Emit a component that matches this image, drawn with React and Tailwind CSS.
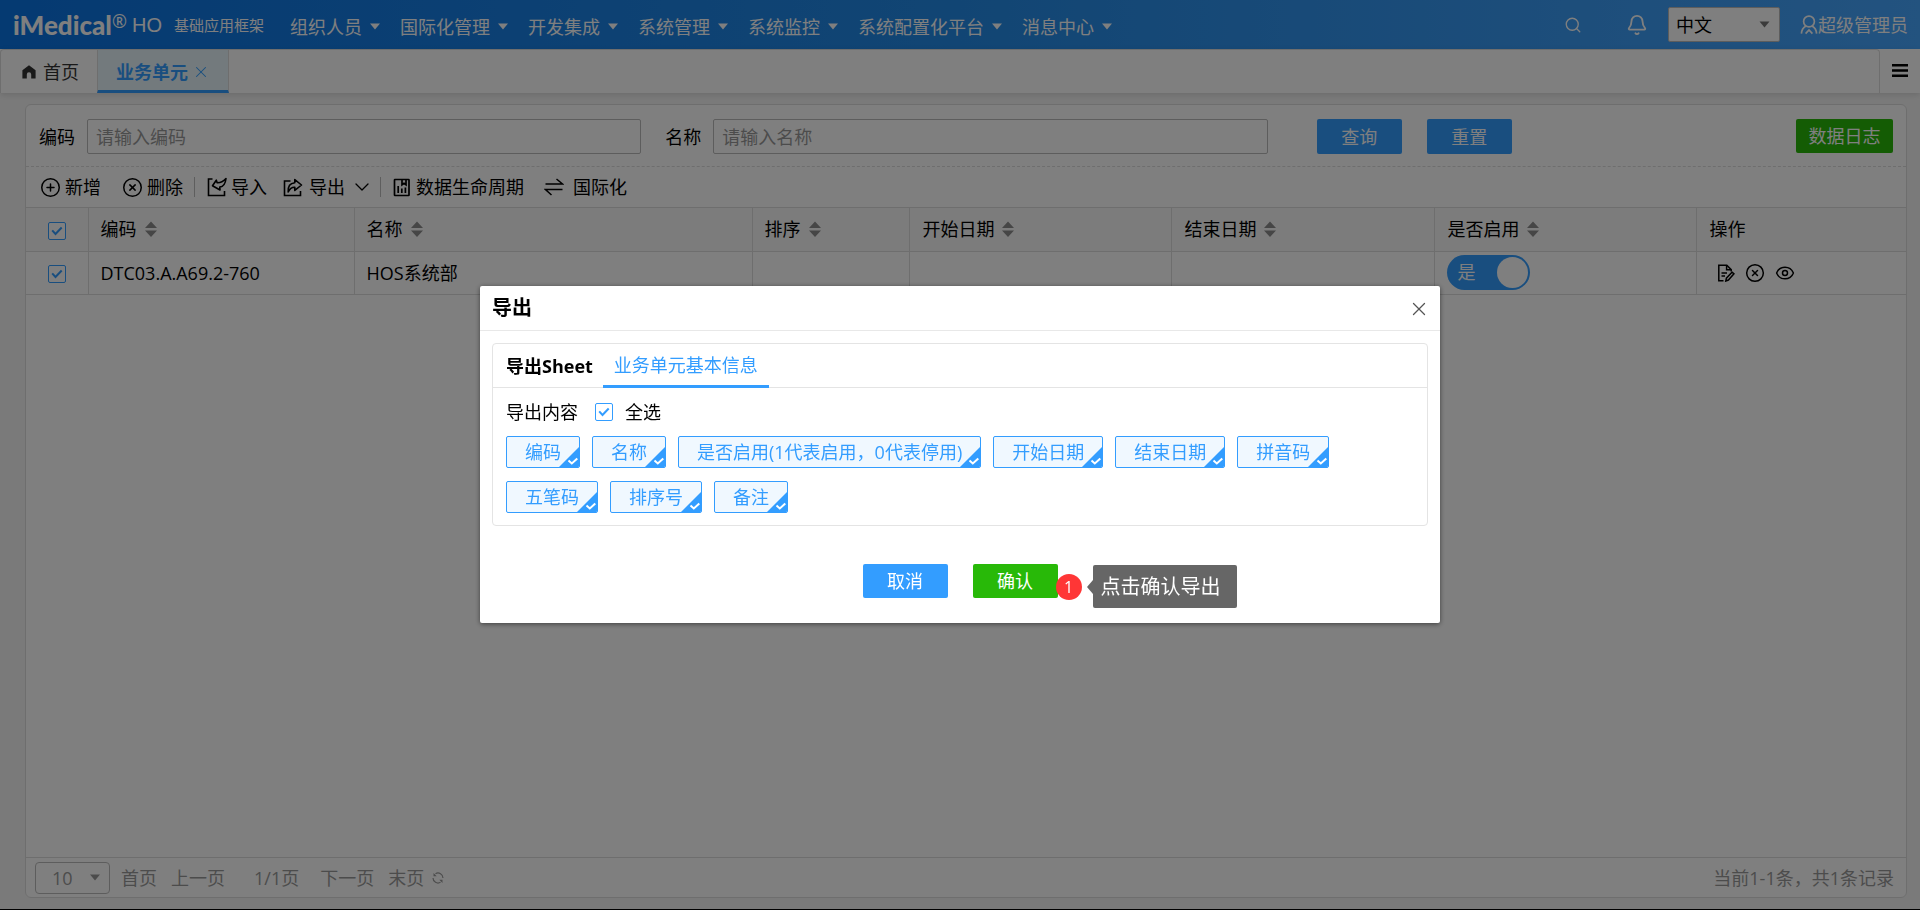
import React from "react";
import { Bell, ChevronDown, CirclePlus, CircleX, Eye, Search, X } from "lucide-react";

const NAV = ["组织人员", "国际化管理", "开发集成", "系统管理", "系统监控", "系统配置化平台", "消息中心"];
const FIELDS = ["编码", "名称", "是否启用(1代表启用，0代表停用)", "开始日期", "结束日期", "拼音码", "五笔码", "排序号", "备注"];
const COLUMNS = [
  { title: "编码", width: 266 },
  { title: "名称", width: 398 },
  { title: "排序", width: 158 },
  { title: "开始日期", width: 262 },
  { title: "结束日期", width: 263 },
  { title: "是否启用", width: 262 },
];

function Caret({ className }) {
  return (
    <svg viewBox="0 0 10 7" className={className} fill="currentColor" aria-hidden="true">
      <path d="M0 0.5h10L5 6.5z" />
    </svg>
  );
}

function SortIcon() {
  return (
    <svg viewBox="0 0 12 16" className="h-4 w-3 text-[#8c8c8c]" fill="currentColor" aria-hidden="true">
      <path d="M6 0.5 12 7H0zM0 9.5h12L6 16z" />
    </svg>
  );
}

function HomeIcon() {
  return (
    <svg viewBox="0 0 14 14" className="size-[14px]" fill="currentColor" aria-hidden="true">
      <path d="M7 0.2 13.6 5.2V13.6H9.2V9.4a2.2 2.2 0 0 0-4.4 0V13.6H0.4V5.2z" />
    </svg>
  );
}

function MenuIcon() {
  return (
    <svg viewBox="0 0 16 13" className="h-[13px] w-4" fill="currentColor" aria-hidden="true">
      <path d="M0 0h16v2.6H0zM0 5.2h16v2.6H0zM0 10.4h16V13H0z" />
    </svg>
  );
}

function UserIcon() {
  return (
    <svg viewBox="0 0 18 20" className="h-5 w-[18px]" fill="none" stroke="currentColor" strokeWidth="1.7" aria-hidden="true">
      <circle cx="9" cy="6.5" r="5.4" />
      <path d="M6 11C3.4 12.4 1.6 15 1.4 18.6M12 11c2.6 1.4 4.4 4 4.6 7.6M5.6 18.6 9 15l3.4 3.6" />
    </svg>
  );
}

function ImportIcon() {
  return (
    <svg viewBox="0 0 20 20" className="size-5" fill="none" stroke="currentColor" strokeWidth="1.6" aria-hidden="true">
      <path d="M5.5 2H1.5v16.5h16V14" />
      <path d="M19 1.5c-.6 5.200-2.700 8.200-6.200 8.600l.2 2.900L5.500 8.800 9.300 3.200l.9 2.600c3 .2 6-1.300 8.800-4.300z" strokeLinejoin="round" />
    </svg>
  );
}

function ExportIcon() {
  return (
    <svg viewBox="0 0 20 20" className="size-5" fill="none" stroke="currentColor" strokeWidth="1.6" aria-hidden="true">
      <path d="M7.5 4H1.5v14.5h16V14" />
      <path d="M5.2 15c-.4-5.500 1.800-8.800 6.600-9.200V2.600L18.500 8l-6.700 5.400v-3.200c-3.300-.2-4.900 1.200-6.600 4.800z" strokeLinejoin="round" />
    </svg>
  );
}

function LifecycleIcon() {
  return (
    <svg viewBox="0 0 18 19" className="h-[19px] w-[18px]" fill="none" stroke="currentColor" strokeWidth="1.7" aria-hidden="true">
      <rect x="1.5" y="1.5" width="14.5" height="16" rx="0.5" />
      <path d="M9 1.5v5.2l2-1.5 2 1.5V1.5M5.2 8v7M8.8 10.5V15M12.4 9.5V15" />
    </svg>
  );
}

function SwapIcon() {
  return (
    <svg viewBox="0 0 20 18" className="h-[18px] w-5" fill="none" stroke="currentColor" strokeWidth="1.5" aria-hidden="true">
      <path d="M1.5 6h17L12.5 1M18.5 11.5h-17l6 5.5" />
    </svg>
  );
}

function EditDocIcon() {
  return (
    <svg viewBox="0 0 18 18" className="size-[18px]" fill="none" stroke="currentColor" strokeWidth="1.5" aria-hidden="true">
      <path d="M6.5 16.8H1.8V1.2h8l4.4 4.4v2" />
      <path d="M9.6 1.2v4.6h4.6M4.5 9H10M4.500 12H8" />
      <path d="m15 8.2 2 1.6-5.6 6.2-2.6 1 .6-2.8z" />
    </svg>
  );
}

function RefreshIcon() {
  return (
    <svg viewBox="0 0 12 12" className="size-3" fill="none" stroke="currentColor" strokeWidth="1.2" aria-hidden="true">
      <path d="M3.5 1.7A5 5 0 0 1 11 6M8.5 10.3A5 5 0 0 1 1 6" />
      <path d="M1.5 1v3.2h3.2zM10.5 11V7.8H7.3z" fill="currentColor" stroke="none" />
    </svg>
  );
}

function Checkbox({ id, label }) {
  return (
    <span className="inline-grid size-[18px] place-items-center align-middle text-[#339dff]">
      <input
        id={id}
        type="checkbox"
        defaultChecked
        aria-label={label}
        className="col-start-1 row-start-1 size-[18px] appearance-none rounded-xs border border-[#339dff] bg-white"
      />
      <svg viewBox="0 0 12 10" className="pointer-events-none col-start-1 row-start-1 h-[10px] w-3" fill="none" stroke="currentColor" strokeWidth="2" aria-hidden="true">
        <path d="m1.2 4.4 3.3 3.6 6.2-6.5" />
      </svg>
    </span>
  );
}

function Divider() {
  return <span className="h-5 w-px bg-[#bdbdbd]" />;
}

function Header() {
  return (
    <header className="flex h-[49px] items-center bg-linear-to-r from-[#0a74e4] via-[#238be8] to-[#46a6ff] pr-3 pl-[13px] text-white">
      <div className="flex items-center whitespace-nowrap">
        <span className="font-['Lato'] text-[26px] leading-6 font-black">iMedical</span>
        <span className="self-start text-[18px] leading-4">®</span>
        <span className="ml-[5px] font-['Liberation_Sans'] text-[20px] leading-6">HO</span>
        <span className="ml-3 text-[15px] leading-6">基础应用框架</span>
      </div>
      <nav className="ml-[26px] flex flex-1 gap-5 pt-1">
        {NAV.map((item) => (
          <a key={item} href="#" className="flex items-center gap-2 whitespace-nowrap">
            {item}
            <Caret className="h-[7px] w-[10px]" />
          </a>
        ))}
      </nav>
      <button type="button" aria-label="搜索" className="mr-11">
        <Search className="size-[18px]" strokeWidth={1.8} />
      </button>
      <button type="button" aria-label="通知" className="mr-5">
        <Bell className="size-[22px]" strokeWidth={2} />
      </button>
      <div className="relative text-black">
        <select aria-label="语言" className="h-[35px] w-28 appearance-none rounded-xs border border-[#bbb] bg-white px-[7px] leading-6">
          <option>中文</option>
        </select>
        <Caret className="pointer-events-none absolute top-[14px] right-[10px] h-[7px] w-[11px] text-[#777]" />
      </div>
      <a href="#" className="ml-5 flex items-center whitespace-nowrap">
        <UserIcon />
        超级管理员
      </a>
    </header>
  );
}

function TabBar() {
  return (
    <div className="flex h-11 bg-white shadow-[0_2px_6px_rgba(0,0,0,0.12)]">
      <div className="flex flex-1 rounded-t-sm border border-b-0 border-[#ddd]">
        <button type="button" className="flex w-24 items-center gap-[7px] pl-[21px] text-[#333]">
          <HomeIcon />
          首页
        </button>
        <div className="flex w-[132px] items-center gap-1 border-x border-b-[3px] border-x-[#ddd] border-b-[#339dff] bg-[#e6f4fb] pt-[3px] pl-[18px] text-[#339dff]">
          <button type="button" className="font-bold">业务单元</button>
          <button type="button" aria-label="关闭业务单元">
            <X className="size-[18px]" strokeWidth={1.4} />
          </button>
        </div>
      </div>
      <button type="button" aria-label="标签菜单" className="flex w-10 items-center justify-center pb-0.5 text-black">
        <MenuIcon />
      </button>
    </div>
  );
}

function SearchForm() {
  return (
    <form className="flex items-center border-b border-dashed border-[#ddd] px-[13px] pt-[14px] pb-3 whitespace-nowrap">
      <label htmlFor="code" className="mr-3">编码</label>
      <input id="code" placeholder="请输入编码" className="h-[35px] w-[29.9%] rounded-xs border border-[#bbb] px-2 placeholder:text-[#999]" />
      <label htmlFor="name" className="mr-3 ml-6">名称</label>
      <input id="name" placeholder="请输入名称" className="h-[35px] w-[29.9%] rounded-xs border border-[#bbb] px-2 placeholder:text-[#999]" />
      <button type="button" className="ml-[49px] h-[35px] w-[85px] rounded-xs bg-[#339dff] text-white">查询</button>
      <button type="button" className="ml-[25px] h-[35px] w-[85px] rounded-xs bg-[#339dff] text-white">重置</button>
      <button type="button" className="ml-auto h-[34px] w-[97px] self-start rounded-xs bg-[#28b908] text-white">数据日志</button>
    </form>
  );
}

function Toolbar() {
  return (
    <div className="flex h-10 items-center px-[14px] whitespace-nowrap">
      <button type="button" className="flex items-center gap-1">
        <CirclePlus className="size-[21px]" strokeWidth={1.7} />
        新增
      </button>
      <button type="button" className="mr-[11px] ml-[21px] flex items-center gap-1">
        <CircleX className="size-[21px]" strokeWidth={1.7} />
        删除
      </button>
      <Divider />
      <button type="button" className="ml-3 flex items-center gap-1">
        <ImportIcon />
        导入
      </button>
      <button type="button" className="mr-[6px] ml-4 flex items-center gap-[6px]">
        <ExportIcon />
        导出
        <ChevronDown className="-ml-px size-6" strokeWidth={1.3} />
      </button>
      <Divider />
      <button type="button" className="ml-3 flex items-center gap-[5px]">
        <LifecycleIcon />
        数据生命周期
      </button>
      <button type="button" className="ml-5 flex items-center gap-[9px]">
        <SwapIcon />
        国际化
      </button>
    </div>
  );
}

function DataTable() {
  return (
    <table className="w-full table-fixed border-collapse text-left">
      <colgroup>
        <col className="w-[62px]" />
        {COLUMNS.map((column) => (
          <col key={column.title} style={{ width: `${(column.width / 1880) * 100}%` }} />
        ))}
        <col />
      </colgroup>
      <thead className="bg-[#f9f9f9]">
        <tr className="h-11 border-y border-[#ddd]">
          <th className="border-r border-[#ddd] pb-0.5 text-center">
            <Checkbox label="选择全部" />
          </th>
          {COLUMNS.map((column) => (
            <th key={column.title} className="border-r border-[#ddd] px-3 pb-0.5 font-normal">
              <span className="flex items-center gap-2">
                {column.title}
                <SortIcon />
              </span>
            </th>
          ))}
          <th className="px-3 pb-0.5 font-normal">操作</th>
        </tr>
      </thead>
      <tbody>
        <tr className="h-[43px] border-b border-[#ddd]">
          <td className="border-r border-[#ddd] pb-0.5 text-center">
            <Checkbox label="选择 DTC03.A.A69.2-760" />
          </td>
          <td className="border-r border-[#ddd] px-3">DTC03.A.A69.2-760</td>
          <td className="border-r border-[#ddd] px-3">HOS系统部</td>
          <td className="border-r border-[#ddd]" />
          <td className="border-r border-[#ddd]" />
          <td className="border-r border-[#ddd]" />
          <td className="border-r border-[#ddd] px-3 pb-0.5">
            <label className="flex h-[35px] w-[83px] items-center justify-between rounded-full bg-[#339dff] pr-0.5 pl-[10px] text-white">
              <input type="checkbox" role="switch" defaultChecked className="sr-only" />
              是
              <span className="size-[31px] rounded-full bg-white" />
            </label>
          </td>
          <td className="px-3">
            <span className="flex items-center gap-[10px] pl-2">
              <button type="button" aria-label="编辑"><EditDocIcon /></button>
              <button type="button" aria-label="删除行"><CircleX className="size-5" strokeWidth={1.8} /></button>
              <button type="button" aria-label="查看"><Eye className="size-5" strokeWidth={1.8} /></button>
            </span>
          </td>
        </tr>
      </tbody>
    </table>
  );
}

function Pagination() {
  return (
    <div className="mt-auto flex h-10 items-center border-t border-[#ddd] pr-3 pl-[9px] whitespace-nowrap text-[#999]">
      <div className="relative">
        <select aria-label="每页条数" className="h-8 w-[75px] appearance-none rounded-sm border border-[#bbb] bg-white pl-4">
          <option>10</option>
        </select>
        <Caret className="pointer-events-none absolute top-3 right-[10px] h-[7px] w-[10px]" />
      </div>
      <button type="button" className="ml-[11px]">首页</button>
      <button type="button" className="ml-[14px]">上一页</button>
      <span className="ml-[29px]">1/1页</span>
      <button type="button" className="ml-[21px]">下一页</button>
      <button type="button" className="ml-[14px]">末页</button>
      <button type="button" aria-label="刷新" className="ml-2"><RefreshIcon /></button>
      <span className="ml-auto">当前1-1条，共1条记录</span>
    </div>
  );
}

function FieldOption({ name }) {
  return (
    <label className="relative flex h-8 items-center overflow-hidden rounded-xs border border-[#339dff] bg-[#f0f8ff] px-[18px] text-[#339dff]">
      <input type="checkbox" defaultChecked className="sr-only" />
      {name}
      <svg viewBox="0 0 20 20" className="absolute right-0 bottom-0 size-5" aria-hidden="true">
        <path d="M20 0v20H0z" fill="currentColor" />
        <path d="m9.500 13.500 3.300 3 5.500-5" fill="none" stroke="#fff" strokeWidth="2" />
      </svg>
    </label>
  );
}

function ExportDialog() {
  return (
    <div className="fixed inset-0 grid place-items-center bg-black/50 pb-px">
      <section role="dialog" aria-label="导出" className="w-1/2 rounded-xs bg-white pb-[25px] shadow-[0_1px_5px_rgba(0,0,0,0.5)]">
        <div className="flex h-[45px] items-center justify-between border-b border-[#e8e8e8] pr-[10px] pl-3">
          <h2 className="text-[20px] leading-6 font-bold">导出</h2>
          <button type="button" aria-label="关闭" className="pt-0.5 text-[#555]">
            <X className="size-[22px]" strokeWidth={1.4} />
          </button>
        </div>
        <div className="mx-3 mt-3 rounded-sm border border-[#e4e4e4] pb-3">
          <div className="flex h-11 border-b border-[#e4e4e4] pl-[13px]">
            <h3 className="mr-[10px] self-center font-bold">导出Sheet</h3>
            <button type="button" className="-mb-px border-b-[3px] border-[#339dff] px-[11px]">
              <span className="text-[#339dff]">业务单元基本信息</span>
            </button>
          </div>
          <div className="mt-3 flex items-center pl-[13px]">
            <span className="mr-[17px]">导出内容</span>
            <Checkbox id="select-all" />
            <label htmlFor="select-all" className="ml-3">全选</label>
          </div>
          <div className="mt-3 flex flex-wrap gap-x-3 gap-y-[13px] px-[13px]">
            {FIELDS.map((field) => <FieldOption key={field} name={field} />)}
          </div>
        </div>
        <div className="mt-[38px] flex items-center justify-center gap-[25px] text-white">
          <button type="button" className="h-[34px] w-[85px] rounded-xs bg-[#339dff]">取消</button>
          <div className="relative">
            <button type="button" className="h-[34px] w-[85px] rounded-xs bg-[#28b908]">确认</button>
            <div className="absolute top-px left-[83px] flex items-center whitespace-nowrap">
              <span className="flex size-[26px] items-center justify-center rounded-full bg-[#ff3636] text-base">1</span>
              <span className="ml-[5px] h-0 w-0 border-y-[7px] border-r-[6px] border-y-transparent border-r-[#666]" />
              <span className="flex h-[43px] items-center rounded-xs bg-[#666] pr-4 pl-2 text-[20px]">点击确认导出</span>
            </div>
          </div>
        </div>
      </section>
    </div>
  );
}

export default function App() {
  return (
    <div className="flex min-h-screen flex-col border-b border-black bg-[#f5f5f5] font-['Open_Sans','Noto_Sans_CJK_SC',sans-serif] text-[18px] leading-6 text-black">
      <Header />
      <TabBar />
      <main className="mt-[11px] mr-[13px] mb-[11px] ml-[25px] flex flex-1 flex-col rounded-md border border-[#ddd] bg-white">
        <SearchForm />
        <Toolbar />
        <DataTable />
        <Pagination />
      </main>
      <ExportDialog />
    </div>
  );
}
